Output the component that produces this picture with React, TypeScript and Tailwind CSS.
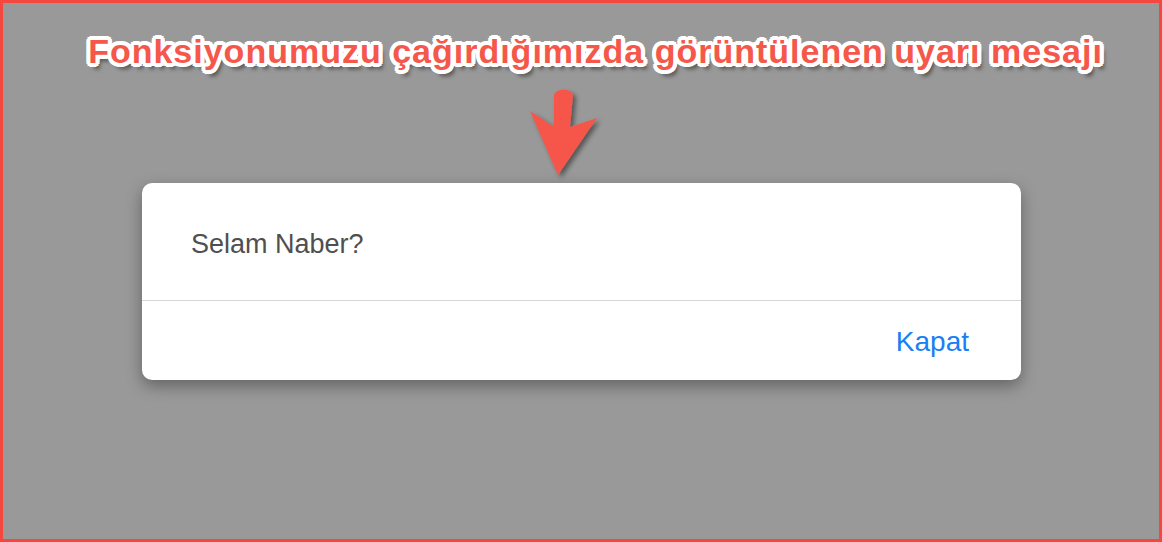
import React from 'react';

const outline =
  '[text-shadow:0_0_0_#fff,3px_0_0_#fff,-3px_0_0_#fff,0_3px_0_#fff,0_-3px_0_#fff,2px_2px_0_#fff,-2px_-2px_0_#fff,2px_-2px_0_#fff,-2px_2px_0_#fff,4px_1px_0_#fff,-4px_1px_0_#fff,4px_-1px_0_#fff,-4px_-1px_0_#fff,1px_4px_0_#fff,-1px_4px_0_#fff,1px_-4px_0_#fff,-1px_-4px_0_#fff,3px_3px_0_#fff,-3px_3px_0_#fff,3px_-3px_0_#fff,-3px_-3px_0_#fff,4px_6px_4px_rgba(0,0,0,0.55)]';

function Arrow() {
  return (
    <svg width="90" height="100" viewBox="0 0 90 100" className="overflow-visible">
      <defs>
        <filter id="sh" x="-30%" y="-30%" width="160%" height="160%">
          <feDropShadow dx="3" dy="3" stdDeviation="2.5" floodColor="#000" floodOpacity="0.45" />
        </filter>
      </defs>
      <path
        d="M46 10 C48 3 63 3 65 10 L62 42 L89 33 L50 90 L22 26 L46 42 Z"
        fill="#f5574a"
        filter="url(#sh)"
      />
    </svg>
  );
}

export default function App() {
  return (
    <div className="w-[1162px] h-[542px] bg-[#999999] border-[3px] border-[#f4473f] relative overflow-hidden font-['Liberation_Sans',Arial,sans-serif]">
      <div className="flex flex-col items-center">
        <div
          className={`mt-[24px] ml-[29px] text-[34px] leading-[48px] font-bold text-[#f5574a] tracking-[1px] ${outline}`}
        >
          Fonksiyonumuzu çağırdığımızda görüntülenen uyarı mesajı
        </div>
      </div>
      <div className="absolute left-[505px] top-[82px]">
        <Arrow />
      </div>
      <div className="mt-[108px] ml-[139px] w-[879px] h-[197px] bg-white rounded-[10px] shadow-[0_6px_16px_rgba(0,0,0,0.35)] flex flex-col">
        <div className="h-[118px] border-b border-[#d6d6d6] flex items-center pl-[49px] pt-[5px]">
          <span className="text-[27px] text-[#4f4f4f]">Selam Naber?</span>
        </div>
        <div className="flex-1 flex items-center justify-end pr-[52px] pt-[3px]">
          <span className="text-[28px] text-[#1a7ff5]">Kapat</span>
        </div>
      </div>
    </div>
  );
}
